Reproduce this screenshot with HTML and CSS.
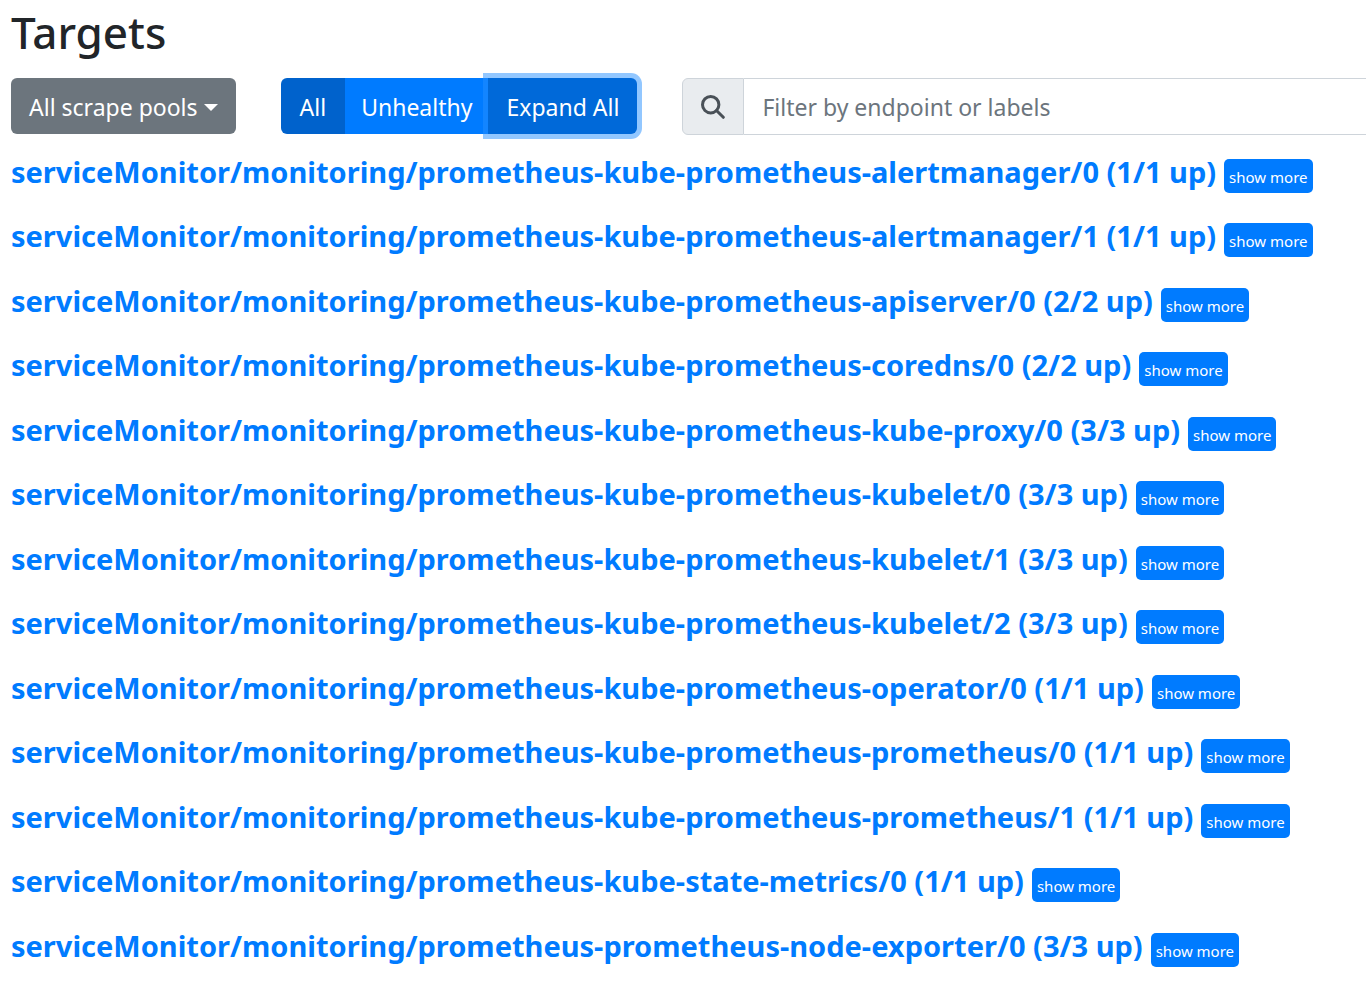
FILE: index.html
```html
<!DOCTYPE html>
<html lang="en">
<head>
<meta charset="utf-8">
<title>Targets</title>
<link rel="stylesheet" href="styles.css">
</head>
<body>
<main class="page">
  <h1 class="title">Targets</h1>
  <div class="toolbar">
    <button class="pools" type="button">All scrape pools<span class="caret"></span></button>
    <div class="group">
      <button class="btn first active" type="button">All</button>
      <button class="btn middle" type="button">Unhealthy</button>
      <button class="btn last focused" type="button">Expand All</button>
    </div>
    <div class="search">
      <label class="search-icon" for="filter" aria-label="Filter"><svg viewBox="0 0 24 24" width="24" height="24" fill="none" stroke="currentColor" stroke-width="3"><circle cx="9.700" cy="9.700" r="8.200"/><path d="M15.500 15.500L22.300 22.300" stroke-linecap="round"/></svg></label>
      <input class="filter" id="filter" type="text" placeholder="Filter by endpoint or labels">
    </div>
  </div>
  <section class="pool-list">
    <h2 class="pool"><a href="#">serviceMonitor/monitoring/prometheus-kube-prometheus-alertmanager/0 (1/1 up)</a><button class="more" type="button">show more</button></h2>
    <h2 class="pool"><a href="#">serviceMonitor/monitoring/prometheus-kube-prometheus-alertmanager/1 (1/1 up)</a><button class="more" type="button">show more</button></h2>
    <h2 class="pool"><a href="#">serviceMonitor/monitoring/prometheus-kube-prometheus-apiserver/0 (2/2 up)</a><button class="more" type="button">show more</button></h2>
    <h2 class="pool"><a href="#">serviceMonitor/monitoring/prometheus-kube-prometheus-coredns/0 (2/2 up)</a><button class="more" type="button">show more</button></h2>
    <h2 class="pool"><a href="#">serviceMonitor/monitoring/prometheus-kube-prometheus-kube-proxy/0 (3/3 up)</a><button class="more" type="button">show more</button></h2>
    <h2 class="pool"><a href="#">serviceMonitor/monitoring/prometheus-kube-prometheus-kubelet/0 (3/3 up)</a><button class="more" type="button">show more</button></h2>
    <h2 class="pool"><a href="#">serviceMonitor/monitoring/prometheus-kube-prometheus-kubelet/1 (3/3 up)</a><button class="more" type="button">show more</button></h2>
    <h2 class="pool"><a href="#">serviceMonitor/monitoring/prometheus-kube-prometheus-kubelet/2 (3/3 up)</a><button class="more" type="button">show more</button></h2>
    <h2 class="pool"><a href="#">serviceMonitor/monitoring/prometheus-kube-prometheus-operator/0 (1/1 up)</a><button class="more" type="button">show more</button></h2>
    <h2 class="pool"><a href="#">serviceMonitor/monitoring/prometheus-kube-prometheus-prometheus/0 (1/1 up)</a><button class="more" type="button">show more</button></h2>
    <h2 class="pool"><a href="#">serviceMonitor/monitoring/prometheus-kube-prometheus-prometheus/1 (1/1 up)</a><button class="more" type="button">show more</button></h2>
    <h2 class="pool"><a href="#">serviceMonitor/monitoring/prometheus-kube-state-metrics/0 (1/1 up)</a><button class="more" type="button">show more</button></h2>
    <h2 class="pool"><a href="#">serviceMonitor/monitoring/prometheus-prometheus-node-exporter/0 (3/3 up)</a><button class="more" type="button">show more</button></h2>
  </section>
</main>
</body>
</html>
```

FILE: styles.css
```css
* { box-sizing: border-box; }
body {
  margin: 0;
  background: #fff;
  color: #212529;
  font-family: "Segoe UI", "Noto Sans", "Open Sans", sans-serif;
  overflow-x: hidden;
}
button, input { font-family: inherit; }
.page { padding: 4px 0 0 11px; }
.title { margin: 0 0 18px; font-size: 44px; line-height: 56px; font-weight: 500; }
.toolbar { display: flex; align-items: flex-start; }
.pools, .btn {
  height: 56px;
  padding: 2px 18px 0;
  border: 0;
  color: #fff;
  font-size: 23px;
  white-space: nowrap;
}
.pools { display: flex; align-items: center; gap: 6px; margin-right: 45px; border-radius: 6px; background: #6c757d; }
.caret { border: 7px solid transparent; border-top-color: #fff; border-bottom: 0; }
.group { display: flex; margin-right: 45px; }
.btn { background: #007bff; }
.btn.first { padding: 2px 19px 0; border-radius: 6px 0 0 6px; }
.btn.middle { padding: 2px 16px 0; }
.btn.last { border-radius: 0 6px 6px 0; }
.btn.active { background: #0062cc; }
.btn.focused { background: #0069d9; box-shadow: 0 0 0 5px rgba(38, 143, 255, .5); }
.search { display: flex; flex: 1; min-width: 0; height: 57px; }
.search-icon {
  display: flex;
  align-items: center;
  justify-content: center;
  width: 62px;
  border: 1px solid #ced4da;
  border-radius: 6px 0 0 6px;
  background: #e9ecef;
  color: #495057;
}
.filter { flex: 1; min-width: 0; padding: 0 18px; border: 1px solid #ced4da; border-width: 1px 0; font-size: 23px; color: #495057; }
.filter::placeholder { color: #6c757d; opacity: 1; }
.pool-list { padding-top: 20px; }
.pool { display: flex; align-items: baseline; gap: 8px; height: 40px; margin: 0 0 24px; font-size: 29px; line-height: 34px; font-weight: 700; white-space: nowrap; }
.pool:nth-child(even) { margin-bottom: 25px; }
.pool a { color: #007bff; text-decoration: none; }
.more { height: 34px; padding: 2px 5px 0; border: 0; border-radius: 5px; background: #007bff; color: #fff; font-size: 15px; }
```
